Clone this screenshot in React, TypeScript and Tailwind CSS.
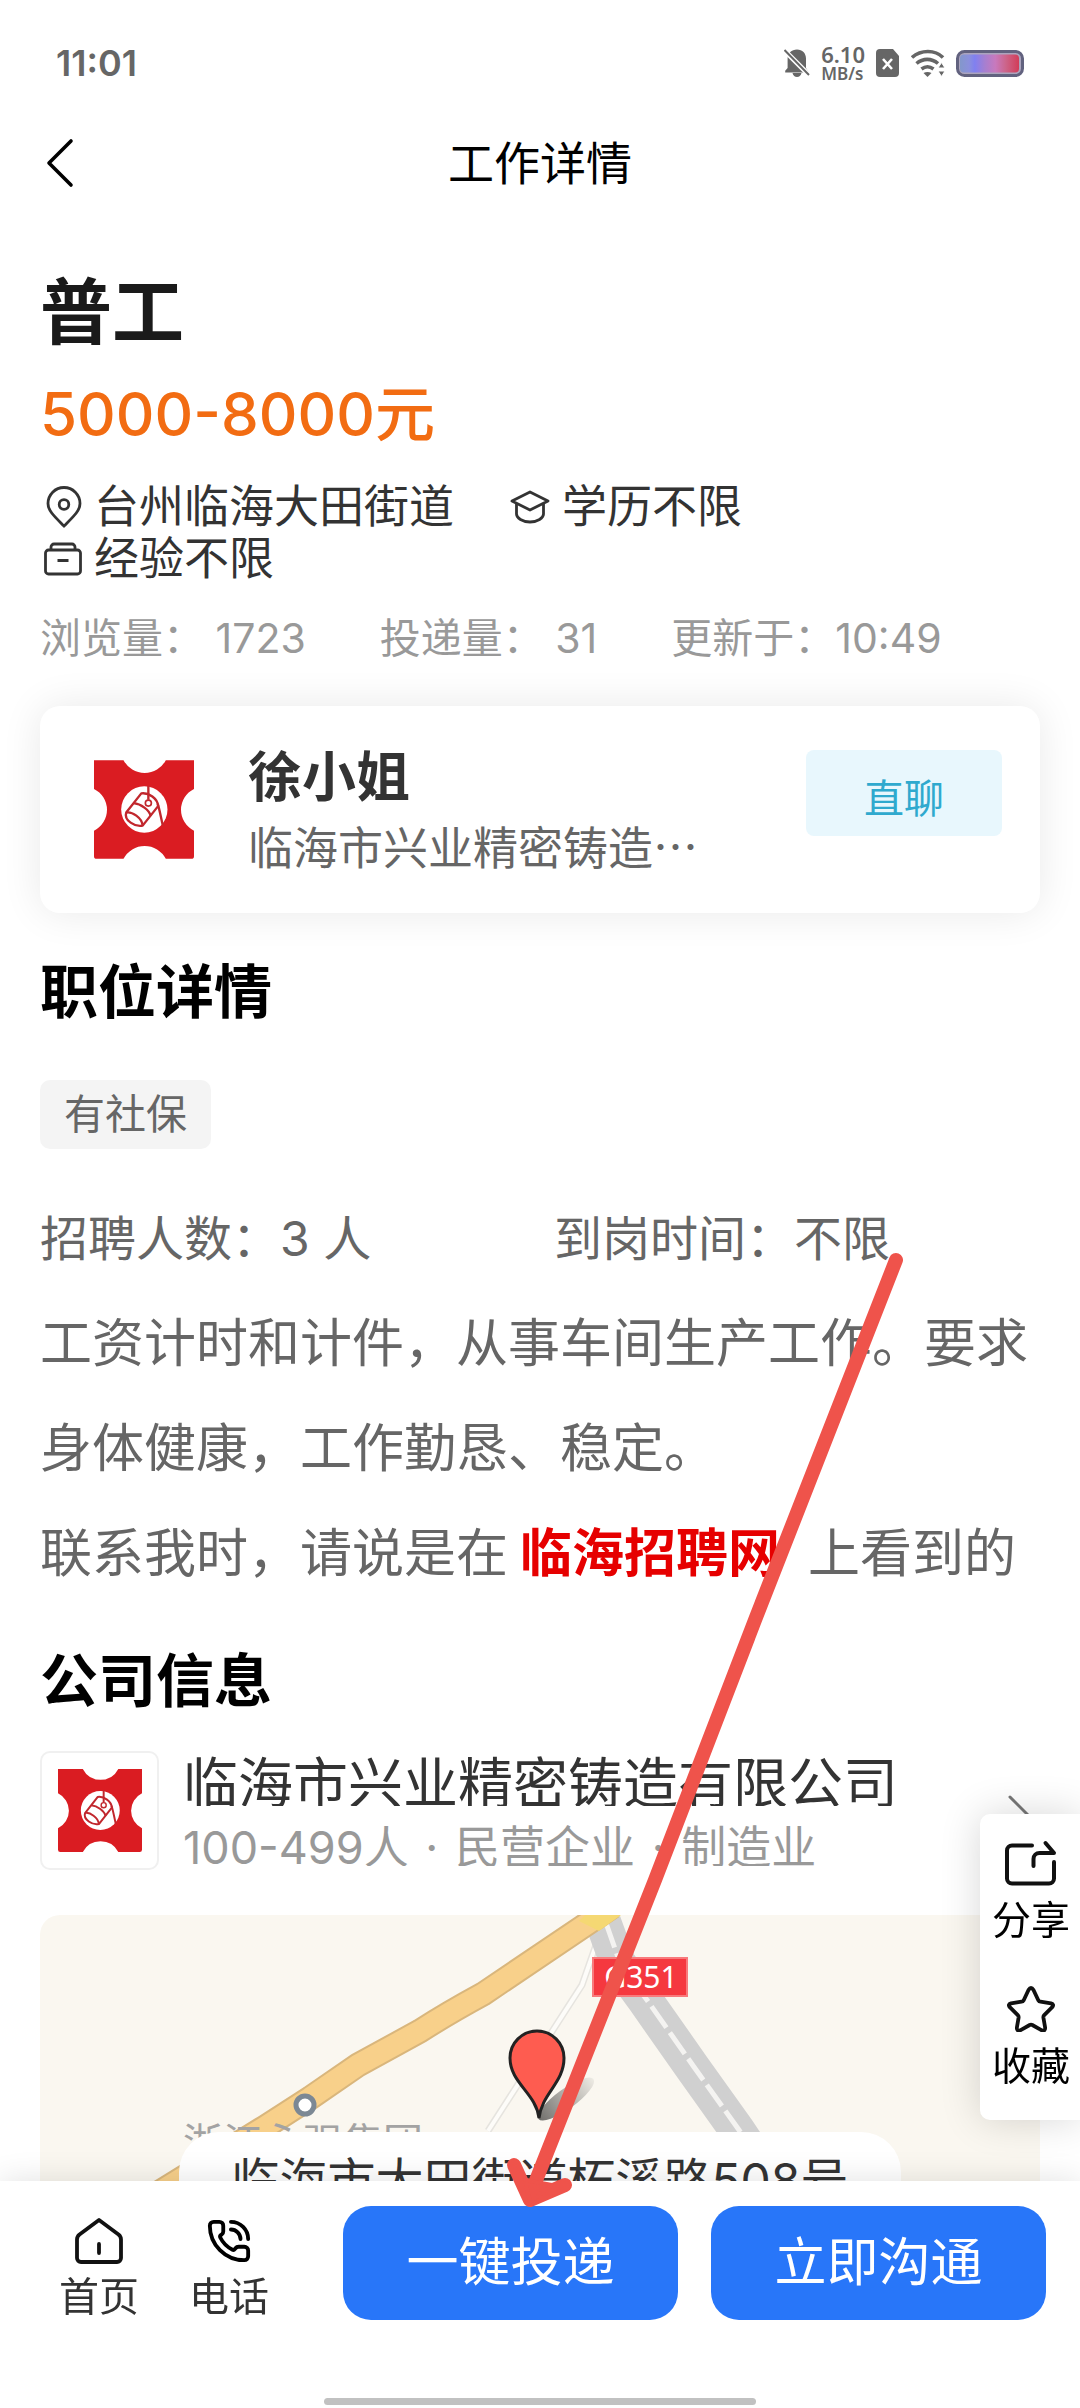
import { PhoneCall } from 'lucide-react';

interface IconProps {
  className?: string;
}

const COMPANY = '临海市兴业精密铸造有限公司';

/* ---------- icons ---------- */

function BellOffIcon({ className }: IconProps) {
  return (
    <svg viewBox="0 0 26 30" className={className} fill="#666">
      <path d="M13 1.5c5.4 0 9 3.8 9 9V20l3 4.500H1.200v-1.800L3.600 20v-9.500c0-5.200 4-9 9.400-9z" />
      <path d="M8.500 25h9c-.6 2.600-2.300 4-4.500 4s-3.900-1.400-4.500-4z" />
      <path d="M1 3l24 24" stroke="#fff" strokeWidth="5" />
      <path d="M.500 2l24.500 25" stroke="#666" strokeWidth="2" />
    </svg>
  );
}

function SimIcon({ className }: IconProps) {
  return (
    <svg viewBox="0 0 24 28" className={className}>
      <path d="M4 0h13l6 7v17a4 4 0 0 1-4 4H4a4 4 0 0 1-4-4V4a4 4 0 0 1 4-4z" fill="#666" />
      <path d="M7 10l9 10M16 10L7 20" stroke="#fff" strokeWidth="2.600" />
    </svg>
  );
}

function WifiIcon({ className }: IconProps) {
  return (
    <svg viewBox="0 0 34 28" className={className} fill="none" stroke="#666" strokeWidth="3.600">
      <path d="M1 8.500C10 .500 24 .500 32 8.500" />
      <path d="M5.500 14.500c6.500-5.500 15-5.500 21.500 0" />
      <path d="M10.500 20c4-3 8-3 12 0" />
      <path d="M12.500 24c2.500-1.500 5.500-1.500 8 0l-4 4z" fill="#666" stroke="none" />
      <path d="M30.500 13.500l3.500 5.500h-7zM30.500 27.500l3.500-5.500h-7z" fill="#666" stroke="#fff" strokeWidth="1" />
    </svg>
  );
}

function BatteryIcon({ className }: IconProps) {
  return (
    <svg viewBox="0 0 68 27" className={className}>
      <defs>
        <linearGradient id="charge">
          <stop offset="0" stopColor="#8397cb" />
          <stop offset=".150" stopColor="#8b90dc" />
          <stop offset=".250" stopColor="#8080f0" />
          <stop offset=".420" stopColor="#a67fd0" />
          <stop offset=".600" stopColor="#c879bd" />
          <stop offset=".780" stopColor="#cc6489" />
          <stop offset="1" stopColor="#d23c58" />
        </linearGradient>
      </defs>
      <rect x="1.500" y="1.500" width="65" height="24" rx="7" fill="#aba4bd" stroke="#62627f" strokeWidth="3" />
      <rect x="4" y="4.500" width="59" height="18" rx="4" fill="url(#charge)" />
    </svg>
  );
}

function PinIcon({ className }: IconProps) {
  return (
    <svg viewBox="0 0 36 42" className={className} fill="none" stroke="#333" strokeWidth="2.800">
      <path d="M18 40C9 31 2 25 2 17.500a16 16 0 0 1 32 0C34 25 27 31 18 40z" />
      <circle cx="18" cy="18.500" r="4.800" />
    </svg>
  );
}

function HatIcon({ className }: IconProps) {
  return (
    <svg viewBox="0 0 40 34" className={className} fill="none" stroke="#333" strokeWidth="2.800" strokeLinejoin="round">
      <path d="M20 2l18 9-18 9L2 11z" />
      <path d="M6.500 14v10c0 4 6 8 13.500 8s13.500-4 13.500-8V14" />
    </svg>
  );
}

function CaseIcon({ className }: IconProps) {
  return (
    <svg viewBox="0 0 38 34" className={className} fill="none" stroke="#333" strokeWidth="2.800">
      <rect x="1.500" y="8" width="35" height="24" rx="3" />
      <path d="M7 8V5a3 3 0 0 1 3-3h18a3 3 0 0 1 3 3v3M13.500 18.500h11" />
    </svg>
  );
}

function ShareIcon({ className }: IconProps) {
  return (
    <svg viewBox="0 0 52 46" className={className} fill="none" stroke="#111" strokeWidth="4" strokeLinecap="round" strokeLinejoin="round">
      <path d="M27 5.500H7a5 5 0 0 0-5 5v28a5 5 0 0 0 5 5h37a5 5 0 0 0 5-5V22" />
      <path d="M28.500 26v-7a6 6 0 0 1 6-6H49l-8.500-10" />
    </svg>
  );
}

function StarIcon({ className }: IconProps) {
  return (
    <svg viewBox="0 0 48 46" className={className} fill="none" stroke="#111" strokeWidth="3.800" strokeLinejoin="round">
      <path d="M21.500 4q2.500-4 5 0l4.800 10.200q.8 1.300 2.200 1.500l10.500 1.600q3.500 1 1.200 3.900l-8 8q-1 1-.8 2.400l1.800 10.400q-.1 3.500-3.400 2.300L25.300 39q-1.300-.6-2.600 0l-9.500 5.300q-3.300 1.200-3.400-2.300l1.800-10.400q.2-1.400-.8-2.400l-8-8q-2.300-2.900 1.200-3.900l10.500-1.600q1.400-.2 2.200-1.500z" />
    </svg>
  );
}

function HomeIcon({ className }: IconProps) {
  return (
    <svg viewBox="0 0 48 46" className={className} fill="none" stroke="#111" strokeWidth="3.800" strokeLinecap="round" strokeLinejoin="round">
      <path d="M24 2L4.500 16.500Q2 18.500 2 21.500V40a4 4 0 0 0 4 4h36a4 4 0 0 0 4-4V21.500q0-3-2.500-5z" />
      <path d="M24 26v9" />
    </svg>
  );
}

function CompanyLogo({ className }: IconProps) {
  return (
    <svg viewBox="72 66 298 294" className={className} fill="none">
      <path
        fill="#da1c22"
        d="M72 66H160A71 71 0 0 0 286 66H370V152A69 69 0 0 0 370 276V352Q370 360 362 360H286A71 71 0 0 0 160 360H80Q72 360 72 352V276A69 69 0 0 0 72 152z"
      />
      <circle cx="222" cy="213" r="69" fill="#fff" />
      <g stroke="#c1272d" strokeWidth="7" strokeLinejoin="round">
        <path d="M213 165L168 222C160 245 195 266 217 261L263 203C262 180 235 162 213 165z" />
        <path d="M168 222C185 218 215 238 217 261" />
        <path d="M190 194C212 196 237 215 241 232" />
        <path d="M234 142V184M262 196C268 215 272 240 277 260" />
        <circle cx="234" cy="194" r="9" strokeWidth="5" />
      </g>
    </svg>
  );
}

/* ---------- map ---------- */

function MapDrawing({ className }: IconProps) {
  return (
    <svg viewBox="0 0 1000 266" preserveAspectRatio="xMinYMin slice" className={className} fill="none">
      <defs>
        <linearGradient id="pinShadow" x1="0" x2="1">
          <stop offset="0" stopColor="#000" stopOpacity=".550" />
          <stop offset="1" stopColor="#000" stopOpacity=".050" />
        </linearGradient>
      </defs>
      <path d="M556 30L542 70L448 216" stroke="#e6e4df" strokeWidth="7" />
      <path d="M556 30L542 70L448 216" stroke="#fdfcf9" strokeWidth="4" />
      <path d="M562 4L578 48L605 85L652 152L697 215L734 270" stroke="#d0d0d0" strokeWidth="36" />
      <path d="M566 8L580 48L607 85L654 152L699 215L736 270" stroke="#f4f3f1" strokeWidth="5" strokeDasharray="26 6" />
      <path d="M572 -8L443 79Q408 98 380 116L318 150L270 183L225 212L115 280" stroke="#d9b67c" strokeWidth="25" />
      <path d="M572 -8L443 79Q408 98 380 116L318 150L270 183L225 212L115 280" stroke="#f8d08a" strokeWidth="21" />
      <path d="M545 0h36l-22 16-20-10z" fill="#f5d873" />
      <circle cx="265" cy="190" r="9" fill="#fff" stroke="#7c8894" strokeWidth="5" />
      <rect x="553" y="43" width="94" height="38" fill="#f5383f" stroke="#f87a7c" strokeWidth="2" />
      <text x="601" y="73" textAnchor="middle" fill="#fff" fontSize="30" fontFamily="Noto Sans, sans-serif">G351</text>
      <text x="143" y="242" fill="#a3a3a3" fontSize="40" fontFamily="Noto Sans CJK SC, sans-serif">浙江永强集团</text>
      <ellipse cx="526" cy="184" rx="34" ry="10" transform="rotate(-36 526 184)" fill="url(#pinShadow)" />
      <path d="M499 203C496 178 470 168 470 143A27 27 0 0 1 524 143C524 168 502 178 499 203z" fill="#fe5c50" stroke="#222" strokeWidth="3" />
    </svg>
  );
}

/* hand drawn arrow pointing at the apply button */
function PointerArrow({ className }: IconProps) {
  return (
    <svg viewBox="500 1250 410 970" className={className} fill="none" stroke="#ef534b" strokeLinecap="round" strokeLinejoin="round">
      <path d="M896 1260L755 1620L655 1880L533 2188" strokeWidth="14" />
      <path d="M514 2165L530 2200L565 2185" strokeWidth="14" />
      <path d="M525 2180L552 2185L530 2202z" fill="#ef534b" strokeWidth="4" />
    </svg>
  );
}

/* ---------- page parts ---------- */

function StatusBar() {
  return (
    <div className="flex h-[126px] items-center justify-between px-14 text-[#666]">
      <span className="text-[36px] font-semibold">11:01</span>
      <div className="flex items-center gap-[11px]">
        <BellOffIcon className="h-[30px] w-[26px]" />
        <div className="flex flex-col font-['Noto_Sans','Noto_Sans_CJK_SC',sans-serif] font-semibold">
          <span className="text-[22px] leading-[22px]">6.10</span>
          <span className="text-[17px] leading-[18px]">MB/s</span>
        </div>
        <SimIcon className="h-7 w-6" />
        <WifiIcon className="h-7 w-[34px]" />
        <BatteryIcon className="h-[27px] w-[68px]" />
      </div>
    </div>
  );
}

function TitleBar() {
  return (
    <header className="grid h-[74px] grid-cols-[1fr_auto_1fr] items-center px-11">
      <button aria-label="返回" className="justify-self-start">
        <svg viewBox="0 0 30 50" className="h-[50px] w-[30px]" fill="none" stroke="#000" strokeWidth="3.600" strokeLinecap="round" strokeLinejoin="round">
          <path d="M27 3L5 25l22 22" />
        </svg>
      </button>
      <h1 className="text-[46px] leading-[56px] text-black">工作详情</h1>
    </header>
  );
}

function JobSummary() {
  return (
    <section>
      <h2 className="text-[72px] font-bold leading-[88px] text-[#1a1a1a]">普工</h2>
      <p className="mt-[22px] text-[60px] font-medium leading-[72px] text-[#f26c12]">5000-8000元</p>

      <ul className="mt-[31px] flex flex-wrap pr-10 text-[45px] leading-[52px] text-[#333]">
        <li className="mr-14 flex items-center gap-3">
          <PinIcon className="ml-1.5 h-[42px] w-9" />
          台州临海大田街道
        </li>
        <li className="mr-14 flex items-center gap-3">
          <HatIcon className="h-[34px] w-10" />
          学历不限
        </li>
        <li className="flex items-center gap-3">
          <CaseIcon className="ml-1 h-[34px] w-[38px]" />
          经验不限
        </li>
      </ul>

      <div className="mt-[29px] flex gap-[74px] text-[41px] leading-[48px] text-[#999]">
        <span>浏览量： 1723</span>
        <span>投递量： 31</span>
        <span>更新于：10:49</span>
      </div>
    </section>
  );
}

function RecruiterCard() {
  return (
    <section className="mt-11 flex h-[207px] items-center rounded-[20px] bg-white pl-[54px] pr-[38px] shadow-[0_0_40px_rgba(0,0,0,0.09)]">
      <CompanyLogo className="h-[99px] w-[100px] shrink-0" />
      <div className="ml-[54px] min-w-0">
        <h3 className="text-[54px] font-bold leading-[64px] text-[#333]">徐小姐</h3>
        <p className="mt-2 w-[455px] truncate font-['Noto_Sans_CJK_SC',sans-serif] text-[45px] leading-[56px] text-[#666]">
          {COMPANY}
        </p>
      </div>
      <button className="mt-11 ml-auto h-[86px] w-[196px] shrink-0 self-start rounded-lg bg-[#e8f7fd] pt-3 text-[40px] text-[#2fa9ce]">
        直聊
      </button>
    </section>
  );
}

function JobDetail() {
  return (
    <section className="mt-[47px]">
      <h2 className="text-[58px] font-bold leading-[64px] text-black">职位详情</h2>
      <span className="mt-14 inline-flex h-[69px] items-center rounded-[10px] bg-[#f4f4f4] px-6 text-[41px] text-[#666]">
        有社保
      </span>
      <div className="mt-[37px] grid grid-cols-[514px_1fr] text-[48px] leading-[105px] text-[#666]">
        <span>招聘人数：3 人</span>
        <span>到岗时间：不限</span>
      </div>
      <div className="text-[52px] leading-[105px] text-[#666]">
        <p>工资计时和计件，从事车间生产工作。要求身体健康，工作勤恳、稳定。</p>
        <p>
          联系我时，请说是在
          <a href="#site" className="ml-3 mr-7 font-bold text-[#e60000]">临海招聘网</a>
          上看到的
        </p>
      </div>
    </section>
  );
}

function CompanyInfo() {
  return (
    <section className="mt-[43px]">
      <h2 className="text-[58px] font-bold leading-[64px] text-black">公司信息</h2>
      <a href="#company" className="mt-[38px] flex items-start">
        <span className="flex h-[119px] w-[119px] shrink-0 items-center justify-center rounded-[10px] border-2 border-[#f0f0f0]">
          <CompanyLogo className="h-[83px] w-[84px]" />
        </span>
        <span className="ml-6 flex flex-col">
          <span className="h-[55px] overflow-hidden text-[55px] leading-[64px] text-[#333]">{COMPANY}</span>
          <span className="mt-4 h-11 overflow-hidden text-[45px] leading-[52px] text-[#999]">
            100-499人<span className="mx-1"> · </span>民营企业<span className="mx-1"> · </span>制造业
          </span>
        </span>
        <svg viewBox="0 0 24 44" className="mr-2 mt-11 ml-auto h-11 w-6 shrink-0" fill="none" stroke="#777" strokeWidth="3" strokeLinecap="round">
          <path d="M2 2l20 20L2 42" />
        </svg>
      </a>

      <div className="relative mt-[45px] h-[266px] overflow-hidden rounded-t-[20px] bg-[#faf7f0]">
        <MapDrawing className="h-full w-full" />
        <div className="absolute inset-x-[139px] top-[217px] flex h-[98px] items-center justify-center rounded-[40px] bg-white text-[48px] text-[#333]">
          临海市大田街道柘溪路508号
        </div>
      </div>
    </section>
  );
}

function SideActions() {
  return (
    <aside className="fixed bottom-[288px] right-0 flex w-[100px] flex-col items-center gap-10 rounded-l-[10px] bg-white pb-7 pl-0.5 pt-[26px] text-[39px] leading-[52px] text-black shadow-[0_0_40px_rgba(0,0,0,0.16)]">
      <button className="flex flex-col items-center gap-2">
        <ShareIcon className="h-[46px] w-[52px]" />
        分享
      </button>
      <button className="flex flex-col items-center gap-2">
        <StarIcon className="h-[46px] w-12" />
        收藏
      </button>
    </aside>
  );
}

function BottomBar() {
  return (
    <footer className="relative flex h-[227px] shrink-0 items-start bg-white px-[34px] pt-[25px] shadow-[0_0_30px_rgba(0,0,0,0.12)]">
      <nav className="ml-[25px] mt-3 flex gap-[50px] text-[40px] leading-[50px] text-[#333]">
        <a href="#home" className="flex flex-col items-center gap-2">
          <HomeIcon className="h-[46px] w-12" />
          首页
        </a>
        <a href="#call" className="flex flex-col items-center gap-2">
          <PhoneCall size={48} strokeWidth={2} className="h-[46px] text-black" />
          电话
        </a>
      </nav>
      <div className="ml-[74px] flex flex-1 gap-[33px] text-[52px] text-white">
        <button className="h-[114px] flex-1 rounded-[28px] bg-[#2876f9]">一键投递</button>
        <button className="h-[114px] flex-1 rounded-[28px] bg-[#2876f9]">立即沟通</button>
      </div>
      <div className="absolute bottom-[3px] left-1/2 h-[7px] w-[432px] -translate-x-1/2 rounded-full bg-[#c1c1c1]" />
    </footer>
  );
}

export default function App() {
  return (
    <div className="relative flex h-screen flex-col overflow-hidden bg-white font-['Inter','Noto_Sans_CJK_SC',sans-serif]">
      <StatusBar />
      <TitleBar />
      <main className="min-h-0 flex-1 overflow-y-auto px-10 pt-[68px] [scrollbar-width:none]">
        <JobSummary />
        <RecruiterCard />
        <JobDetail />
        <CompanyInfo />
      </main>
      <SideActions />
      <BottomBar />
      <PointerArrow className="pointer-events-none absolute left-[500px] top-[1250px] h-[970px] w-[410px]" />
    </div>
  );
}
